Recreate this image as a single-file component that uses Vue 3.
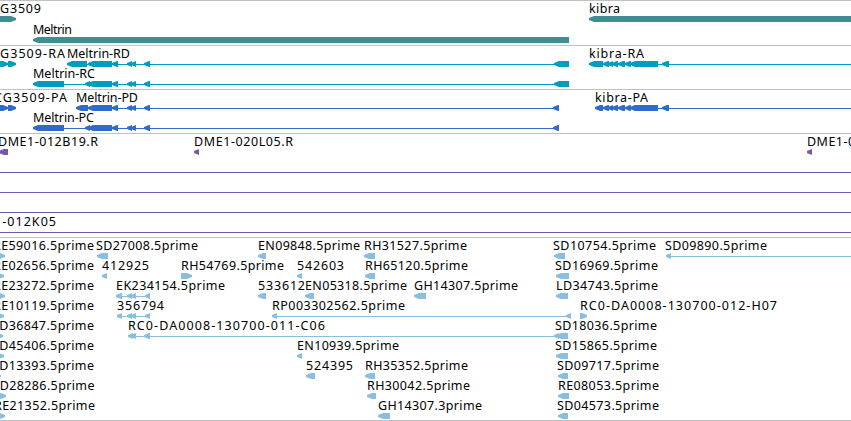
<template>
  <div class="browser">
    <section v-for="track in tracks" :key="track.name" class="track">
      <svg width="851" :height="track.height" :fill="track.color">
        <g v-for="(row, i) in track.rows" :key="i" :transform="`translate(0 ${12 + i * track.step})`">
          <template v-for="(f, j) in row" :key="j">
            <rect v-if="f.line" :x="f.line[0]" y="6" :width="f.line[1] - f.line[0]" height="1" />
            <path v-for="(p, k) in f.parts" :key="k" :d="arrow(p, f.dir)" />
            <text v-if="f.label" :x="f.x" y="0" :textLength="f.width">{{ f.label }}</text>
          </template>
        </g>
      </svg>
    </section>
  </div>
</template>

<script setup>
// one feature: label, label x, label width, blocks, connecting line, direction
const feat = (label, x, width, parts = [], line = null, dir = 'left') => ({ label, x, width, parts, line, dir });

const arrow = ([a, b], dir) => {
  const head = Math.min(5, b - a);
  if (dir === 'right') {
    return `M${a} 3H${b - head}L${b} 5V7L${b - head} 9H${a}Z`;
  }
  return `M${b} 3H${a + head}L${a} 5V7L${a + head} 9H${b}Z`;
};

const exons = [[88, 112], [112, 118], [127, 132], [131, 136], [144, 150]];
const kibra = [[603, 609], [608, 613], [612, 618], [618, 625], [625, 631], [630, 658], [662, 669]];

const tracks = [
  {
    name: 'genes', color: '#3e8e92', height: 44, step: 21,
    rows: [
      [feat('G3509', 0, 41, [[-9, 16]], null, 'right'), feat('kibra', 589, 31, [[589, 860]])],
      [feat('Meltrin', 33, 39, [[33, 569]])],
    ],
  },
  {
    name: 'transcripts', color: '#009dbf', height: 43, step: 20,
    rows: [
      [
        feat('G3509-RA', 0, 65, [[-2, 8], [8, 16]], [0, 10], 'right'),
        feat('Meltrin-RD', 67, 63, [[67, 87], ...exons, [554, 569]], [87, 555]),
        feat('kibra-RA', 589, 55, [[589, 603], ...kibra], [600, 851]),
      ],
      [feat('Meltrin-RC', 33, 62, [[33, 64], [85, 90], ...exons, [554, 569]], [64, 555])],
    ],
  },
  {
    name: 'proteins', color: '#306acb', height: 43, step: 20,
    rows: [
      [
        feat('CG3509-PA', -6, 73, [[-2, 8], [8, 16]], [0, 10], 'right'),
        feat('Meltrin-PD', 76, 62, [[76, 88], ...exons, [553, 559]], [87, 555]),
        feat('kibra-PA', 595, 53, [[595, 603], ...kibra], [600, 851]),
      ],
      [feat('Meltrin-PC', 33, 61, [[33, 64], [85, 90], ...exons, [553, 559]], [64, 555])],
    ],
  },
  {
    name: 'clones', color: '#7557ab', height: 103, step: 20,
    rows: [
      [
        feat('DME1-012B19.R', -2, 100, [[-1, 8]]),
        feat('DME1-020L05.R', 194, 99, [[194, 199]]),
        feat('DME1-012K05.R', 807, 99, [[807, 812]]),
      ],
      [feat('', 0, 0, [], [0, 851])],
      [feat('', 0, 0, [], [0, 851])],
      [feat('', 0, 0, [], [0, 851])],
      [feat('1-012K05', -6, 62, [], [0, 851])],
    ],
  },
  {
    name: 'ests', color: '#8abede', height: 182, step: 20,
    rows: [
      [
        feat('RE59016.5prime', -7, 101, [[-5, 5]], null, 'right'),
        feat('SD27008.5prime', 96, 102, [[97, 108]]),
        feat('EN09848.5prime', 258, 102, [[258, 266]]),
        feat('RH31527.5prime', 364, 103, [[364, 375]]),
        feat('SD10754.5prime', 553, 103, [[554, 565]]),
        feat('SD09890.5prime', 665, 102, [[666, 671]], [670, 851]),
      ],
      [
        feat('RE02656.5prime', -7, 101, [[-5, 4]], null, 'right'),
        feat('412925', 102, 47, [[102, 107]]),
        feat('RH54769.5prime', 181, 103, [[181, 192]], null, 'right'),
        feat('542603', 297, 47, [[297, 302]]),
        feat('RH65120.5prime', 365, 103, [[365, 375]]),
        feat('SD16969.5prime', 555, 103, [[556, 569]]),
      ],
      [
        feat('RE23272.5prime', -7, 101, [[-5, 5]], null, 'right'),
        feat('EK234154.5prime', 116, 109, [[116, 122], [127, 132], [131, 136], [145, 150]], [120, 148]),
        feat('533612', 258, 47, [[258, 266]]),
        feat('EN05318.5prime', 305, 102, [[305, 314]]),
        feat('GH14307.5prime', 414, 104, [[414, 426]]),
        feat('LD34743.5prime', 556, 102, [[556, 568]]),
      ],
      [
        feat('RE10119.5prime', -7, 101, [[-5, 4]], null, 'right'),
        feat('356794', 117, 47, [[117, 122], [127, 132], [131, 136], [145, 150]], [120, 148]),
        feat('RP003302562.5prime', 272, 133, [[272, 277], [566, 571]], [275, 568]),
        feat('RC0-DA0008-130700-012-H07', 580, 197, [[580, 587]], null, 'right'),
      ],
      [
        feat('SD36847.5prime', -8, 102, [[-5, 3]], null, 'right'),
        feat('RC0-DA0008-130700-011-C06', 128, 197, [[128, 133], [131, 136], [144, 150]], [132, 556]),
        feat('SD18036.5prime', 555, 102, [[554, 559], [556, 568]]),
      ],
      [
        feat('SD45406.5prime', -8, 102, [[-5, 4]], null, 'right'),
        feat('EN10939.5prime', 297, 102, [[297, 302]]),
        feat('SD15865.5prime', 555, 102, [[556, 568]]),
      ],
      [
        feat('SD13393.5prime', -8, 102, [[-5, 1]], null, 'right'),
        feat('524395', 306, 47, [[306, 315]]),
        feat('RH35352.5prime', 365, 103, [[365, 375]]),
        feat('SD09717.5prime', 557, 102, [[558, 568]]),
      ],
      [
        feat('SD28286.5prime', -7.5, 102, [[-5, 6]], null, 'right'),
        feat('RH30042.5prime', 367, 103, [[367, 376]]),
        feat('RE08053.5prime', 558, 101, [[558, 569]]),
      ],
      [
        feat('RE21352.5prime', -6, 101, [[-5, 5]], null, 'right'),
        feat('GH14307.3prime', 378, 104, [[378, 390]]),
        feat('SD04573.5prime', 557, 102, [[558, 568]]),
      ],
    ],
  },
];
</script>

<style>
body {
  margin: 0;
  background: #fff;
}
</style>

<style scoped>
.browser {
  width: 851px;
  height: 421px;
  box-sizing: border-box;
  overflow: hidden;
  border-bottom: 1px solid #c0c0c0;
  background: #fff;
}

.track {
  border-top: 1px solid #c0c0c0;
}

.track svg {
  display: block;
}

.track text {
  font-family: "Noto Sans", "DejaVu Sans", sans-serif;
  font-size: 12.5px;
  fill: #000;
}
</style>
